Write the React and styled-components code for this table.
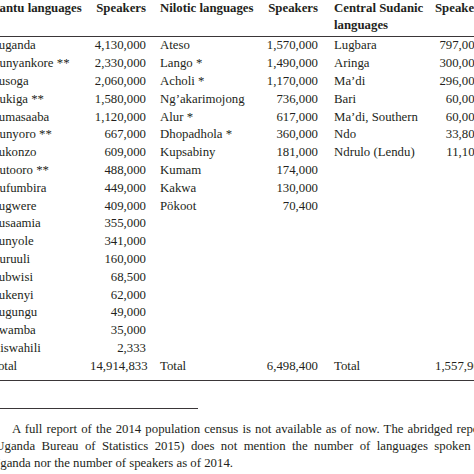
import React from 'react'
import styled, { createGlobalStyle } from 'styled-components'

const Global = createGlobalStyle`
  html, body {
    margin: 0;
    padding: 0;
    background: #fff;
    overflow: hidden;
  }
  body {
    font-family: "Liberation Serif", "DejaVu Serif", serif;
    color: #231f20;
  }
`;

const Page = styled.div`
  width: 496px;
  margin-left: -9px;
  font-size: 12.8px;
`;

const Table = styled.table`
  width: 490px;
  table-layout: fixed;
  border-collapse: collapse;
  tbody {
    border-top: 1.5px solid #3a3638;
    border-bottom: 1.5px solid #3a3638;
  }
`;

const Head = styled.th`
  box-sizing: border-box;
  text-align: ${p => (p.$num ? 'right' : 'left')};
  vertical-align: top;
  font-weight: 700;
  line-height: 16.7px;
  padding: 0 0 3px ${p => p.$pad || 0}px;
  width: ${p => p.$w}px;
`;

const Cell = styled.td`
  box-sizing: border-box;
  text-align: ${p => (p.$num ? 'right' : 'left')};
  line-height: 17.8px;
  padding: 0 0 ${p => (p.$last ? 4 : 0)}px ${p => p.$pad || 0}px;
  white-space: nowrap;
`;

const Rule = styled.div`
  width: 207px;
  border-top: 1px solid #3a3638;
  margin-top: 27px;
`;

const Note = styled.div`
  margin-top: 12px;
  line-height: 17px;
`;

const NoteLine = styled.div`
  text-align: justify;
  text-align-last: ${p => (p.$last ? 'left' : 'justify')};
  text-indent: ${p => (p.$indent ? 21 : 0)}px;
  white-space: nowrap;
`;

const cols = [
  { title: 'Bantu languages', w: 99 },
  { title: 'Speakers', w: 56, num: true },
  { title: 'Nilotic languages', w: 116, pad: 14 },
  { title: 'Speakers', w: 56, num: true },
  { title: 'Central Sudanic languages', w: 117, pad: 16 },
  { title: 'Speakers', w: 46, num: true },
];

const bantu = [
  ['Luganda', '4,130,000'],
  ['Runyankore **', '2,330,000'],
  ['Lusoga', '2,060,000'],
  ['Rukiga **', '1,580,000'],
  ['Lumasaaba', '1,120,000'],
  ['Runyoro **', '667,000'],
  ['Lukonzo', '609,000'],
  ['Rutooro **', '488,000'],
  ['Rufumbira', '449,000'],
  ['Lugwere', '409,000'],
  ['Lusaamia', '355,000'],
  ['Lunyole', '341,000'],
  ['Ruruuli', '160,000'],
  ['Lubwisi', '68,500'],
  ['Lukenyi', '62,000'],
  ['Lugungu', '49,000'],
  ['Lwamba', '35,000'],
  ['Kiswahili', '2,333'],
];

const nilotic = [
  ['Ateso', '1,570,000'],
  ['Lango *', '1,490,000'],
  ['Acholi *', '1,170,000'],
  ['Ng’akarimojong', '736,000'],
  ['Alur *', '617,000'],
  ['Dhopadhola *', '360,000'],
  ['Kupsabiny', '181,000'],
  ['Kumam', '174,000'],
  ['Kakwa', '130,000'],
  ['Pökoot', '70,400'],
];

const sudanic = [
  ['Lugbara', '797,000'],
  ['Aringa', '300,000'],
  ['Ma’di', '296,000'],
  ['Bari', '60,000'],
  ['Ma’di, Southern', '60,000'],
  ['Ndo', '33,800'],
  ['Ndrulo (Lendu)', '11,100'],
];

const totals = [
  ['Total', '14,914,833'],
  ['Total', '6,498,400'],
  ['Total', '1,557,900'],
];

export default function App() {
  const groups = [bantu, nilotic, sudanic];
  const rows = bantu.map((_, i) => groups.map(g => g[i] || ['', '']));
  rows.push(totals);

  return (
    <>
      <Global />
      <Page>
        <Table>
          <thead>
            <tr>
              {cols.map((c, i) => (
                <Head key={i} $w={c.w} $num={c.num} $pad={c.pad}>{c.title}</Head>
              ))}
            </tr>
          </thead>
          <tbody>
            {rows.map((r, i) => {
              const last = i === rows.length - 1;
              return (
                <tr key={i}>
                  {r.map((pair, g) => (
                    <React.Fragment key={g}>
                      <Cell $pad={cols[g * 2].pad} $last={last}>{pair[0]}</Cell>
                      <Cell $num $last={last}>{pair[1]}</Cell>
                    </React.Fragment>
                  ))}
                </tr>
              );
            })}
          </tbody>
        </Table>
        <Rule />
        <Note>
          <NoteLine $indent>A full report of the 2014 population census is not available as of now. The abridged report</NoteLine>
          <NoteLine>(Uganda Bureau of Statistics 2015) does not mention the number of languages spoken in</NoteLine>
          <NoteLine $last>Uganda nor the number of speakers as of 2014.</NoteLine>
        </Note>
      </Page>
    </>
  );
}
